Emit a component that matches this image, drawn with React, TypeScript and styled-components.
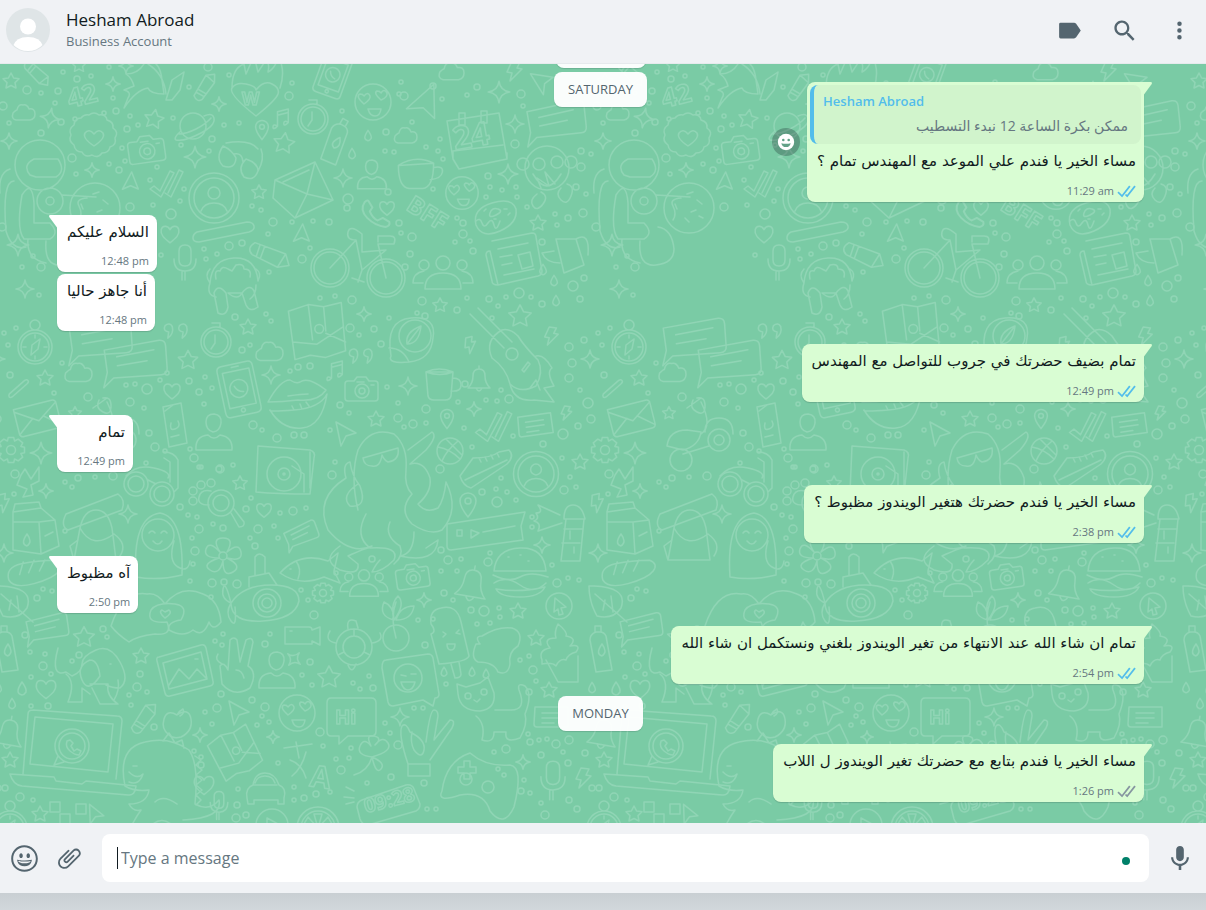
import React from "react";
import styled, { createGlobalStyle, css } from "styled-components";

const GlobalStyle = createGlobalStyle`
  *, *::before, *::after { box-sizing: border-box; }
  body {
    margin: 0;
    background: #d1d6d9;
    color: #111b21;
    font-family: "Open Sans", "Noto Sans", "DejaVu Sans", sans-serif;
  }
`;

/* ---------- layout ---------- */

const Page = styled.div`
  display: flex;
  flex-direction: column;
  min-height: 100vh;
  padding-bottom: 17px;
  background: linear-gradient(to top, #d1d7db, #c9cfd3 17px);
`;

const Header = styled.header`
  position: relative;
  z-index: 2;
  display: flex;
  align-items: center;
  height: 64px;
  padding: 0 13px 4px 6px;
  background: #f0f2f5;
  box-shadow: inset 0 -1px 0 #e6eaed;
`;

const Identity = styled.div`
  flex: 1;
  min-width: 0;
  margin-left: 16px;
`;

const ContactName = styled.h1`
  margin: 0;
  font-size: 17px;
  font-weight: 400;
  line-height: 22px;
`;

const ContactStatus = styled.p`
  margin: 0;
  color: #667781;
  font-size: 13px;
  line-height: 20px;
`;

const HeaderActions = styled.div`
  display: flex;
  gap: 28px;
`;

const IconButton = styled.button`
  display: flex;
  align-items: center;
  justify-content: center;
  flex: none;
  padding: 0;
  border: 0;
  background: none;
  color: #54656f;
  cursor: pointer;
`;

const Chat = styled.main`
  position: relative;
  flex: 1;
  display: flex;
  flex-direction: column;
  justify-content: flex-end;
  overflow: hidden;
  background: #7acba5;
`;

const Wallpaper = styled.svg`
  position: absolute;
  inset: 0;
  width: 100%;
  height: 100%;
`;

const StickyDates = styled.div`
  position: absolute;
  top: -31px;
  left: 57px;
  right: 62px;
  display: flex;
  flex-direction: column;
  align-items: center;
  gap: 4px;
`;

const Messages = styled.ol`
  position: relative;
  display: flex;
  flex-direction: column;
  margin: 0;
  padding: 18px 62px 21px 57px;
  list-style: none;
`;

const MessageRow = styled.li<{ $out?: boolean; $grouped?: boolean }>`
  display: flex;
  align-items: center;
  justify-content: ${(p) => (p.$out ? "flex-end" : "flex-start")};
  gap: 7px;
  margin-top: ${(p) => (p.$grouped ? 2 : 13)}px;
  &:first-child { margin-top: 0; }
`;

const DateRow = styled.li`
  display: flex;
  justify-content: center;
  margin-top: 12px;
`;

const DatePill = styled.span`
  height: 35px;
  padding: 0 14px;
  border-radius: 8px;
  background: rgba(255, 255, 255, 0.96);
  box-shadow: 0 1px 1px rgba(11, 20, 26, 0.14);
  color: #54656f;
  font-size: 13px;
  line-height: 35px;
`;

const LeavingPill = styled(DatePill)`
  width: 90px;
`;

const Bubble = styled.article<{ $out?: boolean; $tail?: boolean }>`
  position: relative;
  min-width: 76px;
  border-radius: 8px;
  background: ${(p) => (p.$out ? "#d9fdd3" : "#ffffff")};
  box-shadow: 0 1px 1px rgba(11, 20, 26, 0.16);
  ${(p) =>
    p.$tail &&
    (p.$out
      ? css`border-top-right-radius: 0;`
      : css`border-top-left-radius: 0;`)}
`;

const TailSvg = styled.svg<{ $out?: boolean }>`
  position: absolute;
  top: 0;
  ${(p) => (p.$out ? "left: 100%;" : "right: 100%;")}
  color: ${(p) => (p.$out ? "#d9fdd3" : "#ffffff")};
`;

const Body = styled.div`
  padding: 6px 8px 3px 10px;
`;

const MessageText = styled.p`
  margin: 0;
  font-family: "DejaVu Sans", sans-serif;
  font-size: 15px;
  line-height: 22px;
`;

const Meta = styled.div<{ $out?: boolean }>`
  display: flex;
  align-items: center;
  justify-content: flex-end;
  gap: 3px;
  height: 16px;
  margin-top: ${(p) => (p.$out ? 11 : 10)}px;
  color: #667781;
  font-size: 11px;
  line-height: 16px;
`;

const Ticks = styled.svg<{ $read?: boolean }>`
  color: ${(p) => (p.$read ? "#53bdeb" : "#8696a0")};
`;

const QuoteInset = styled.div`
  padding: 3px 3px 0;
`;

const Quote = styled.blockquote`
  height: 59px;
  margin: 0;
  padding: 5px 13px 0 9px;
  border-left: 4px solid #53bdeb;
  border-radius: 8px;
  background: #d1f4cc;
`;

const QuoteAuthor = styled.cite`
  display: block;
  color: #53bdeb;
  font-size: 13px;
  font-style: normal;
  font-weight: 600;
  line-height: 22px;
`;

const QuoteText = styled.p`
  margin: 3px 0 0;
  color: #667781;
  font-size: 14px;
  line-height: 22px;
`;

const ReactButton = styled(IconButton)`
  width: 28px;
  height: 28px;
  border-radius: 50%;
  background: rgba(11, 20, 26, 0.26);
  color: #ffffff;
`;

const Composer = styled.form`
  display: flex;
  align-items: center;
  height: 70px;
  padding: 0 13px 0 10px;
  background: #f0f2f5;
`;

const ComposerTools = styled.div`
  display: flex;
  gap: 17px;
  margin-right: 19px;
`;

const Field = styled.label`
  display: flex;
  align-items: center;
  flex: 1;
  min-width: 0;
  height: 48px;
  margin-right: 18px;
  padding: 0 19px 0 15px;
  border-radius: 8px;
  background: #ffffff;
`;

const Caret = styled.span`
  width: 1px;
  height: 22px;
  margin-right: 3px;
  background: #111b21;
`;

const FieldInput = styled.input`
  flex: 1;
  min-width: 0;
  padding: 0;
  border: 0;
  outline: 0;
  background: none;
  color: #111b21;
  caret-color: transparent;
  font: inherit;
  font-size: 16px;
  &::placeholder { color: #667781; opacity: 1; }
`;

const StatusDot = styled.span`
  width: 8px;
  height: 8px;
  margin-top: 6px;
  border-radius: 50%;
  background: #008069;
`;

/* ---------- icons ---------- */

const Glyph = ({ d, size = 27 }: { d: string; size?: number }) => (
  <svg width={size} height={size} viewBox="0 0 24 24" fill="currentColor" aria-hidden="true">
    <path d={d} />
  </svg>
);

const LABEL = "M4 5h12q1.200 0 1.900.9L22 12l-4.100 6.100q-.700.9-1.900.9H4q-1.200 0-1.200-1.200V6.200Q2.800 5 4 5z";
const SEARCH =
  "M15.9 14.3H15l-.3-.3c1-1.1 1.6-2.7 1.6-4.3 0-3.700-3-6.700-6.700-6.700S3 6 3 9.700s3 6.700 6.700 6.700c1.600 0 3.200-.6 4.300-1.600l.3.3v.8l5.100 5.100 1.500-1.500-5-5.200zm-6.200 0c-2.600 0-4.600-2.100-4.600-4.600s2.100-4.600 4.600-4.600 4.600 2.100 4.600 4.600-2 4.600-4.600 4.600z";
const MENU =
  "M12 8a2 2 0 1 0-.001-4.001A2 2 0 0 0 12 8zm0 2a2 2 0 1 0-.001 3.999A2 2 0 0 0 12 10zm0 6a2 2 0 1 0-.001 3.999A2 2 0 0 0 12 16z";
const SMILEY =
  "M9.153 11.603c.795 0 1.439-.879 1.439-1.962s-.644-1.962-1.439-1.962-1.439.879-1.439 1.962.644 1.962 1.439 1.962zm-3.204 1.362c-.026-.307-.131 5.218 6.063 5.551 6.066-.25 6.066-5.551 6.066-5.551-6.078 1.416-12.129 0-12.129 0zm11.363 1.108s-.669 1.959-5.051 1.959c-3.505 0-5.388-1.164-5.607-1.959 0 0 5.912 1.055 10.658 0zM11.804 1.011C5.609 1.011.978 6.033.978 12.228s4.826 10.761 11.021 10.761S23.02 18.423 23.02 12.228c.001-6.195-5.021-11.217-11.216-11.217zM12 21.354c-5.273 0-9.381-3.886-9.381-9.159s3.942-9.548 9.215-9.548 9.548 4.275 9.548 9.548c-.001 5.272-4.109 9.159-9.382 9.159zm3.108-9.751c.795 0 1.439-.879 1.439-1.962s-.644-1.962-1.439-1.962-1.439.879-1.439 1.962.644 1.962 1.439 1.962z";
const CLIP =
  "M1.816 15.556v.002c0 1.502.584 2.912 1.646 3.972s2.472 1.647 3.974 1.647a5.58 5.58 0 0 0 3.972-1.645l9.547-9.548c.769-.768 1.147-1.767 1.058-2.817-.079-.968-.548-1.927-1.319-2.698-1.594-1.592-4.068-1.711-5.517-.262l-7.916 7.915c-.881.881-.792 2.25.214 3.261.959.958 2.423 1.053 3.263.215l5.511-5.512c.28-.28.267-.722.053-.936l-.244-.244c-.191-.191-.567-.349-.957.04l-5.506 5.506c-.18.18-.635.127-.976-.214-.098-.097-.576-.613-.213-.973l7.915-7.917c.818-.817 2.267-.699 3.23.262.5.501.802 1.1.849 1.685.051.573-.156 1.111-.589 1.543l-9.547 9.549a3.97 3.97 0 0 1-2.829 1.171 3.975 3.975 0 0 1-2.83-1.173 3.973 3.973 0 0 1-1.172-2.828c0-1.071.415-2.076 1.172-2.83l7.209-7.211c.157-.157.264-.579.028-.814L11.5 4.36a.572.572 0 0 0-.834.018l-7.205 7.207a5.577 5.577 0 0 0-1.645 3.971z";
const MIC =
  "M11.999 14.942c2.001 0 3.531-1.53 3.531-3.531V4.35c0-2.001-1.53-3.531-3.531-3.531S8.469 2.35 8.469 4.35v7.061c0 2.001 1.53 3.531 3.53 3.531zm6.238-3.53c0 3.531-2.942 6.002-6.237 6.002s-6.237-2.471-6.237-6.002H3.761c0 4.001 3.178 7.297 7.061 7.885v3.884h2.354v-3.884c3.884-.588 7.061-3.884 7.061-7.885h-2z";
const TICKS =
  "M17.394 5.035l-.57-.444a.434.434 0 0 0-.609.076l-6.39 8.198a.38.38 0 0 1-.577.039l-.427-.388a.381.381 0 0 0-.578.038l-.451.576a.497.497 0 0 0 .043.645l1.575 1.51a.38.38 0 0 0 .577-.039l7.483-9.602a.436.436 0 0 0-.076-.609zm-4.892 0l-.57-.444a.434.434 0 0 0-.609.076l-6.39 8.198a.38.38 0 0 1-.577.039l-2.614-2.556a.435.435 0 0 0-.614.007l-.505.516a.435.435 0 0 0 .007.614l3.887 3.8a.38.38 0 0 0 .577-.039l7.483-9.602a.435.435 0 0 0-.075-.609z";

const Avatar = () => (
  <svg width="44" height="44" viewBox="0 0 44 44" role="img" aria-label="Contact picture">
    <defs>
      <clipPath id="avatar-clip"><circle cx="22" cy="22" r="21" /></clipPath>
    </defs>
    <circle cx="22" cy="22" r="22" fill="#dfe5e7" />
    <circle cx="22" cy="18.500" r="8" fill="#fff" />
    <path clipPath="url(#avatar-clip)" d="M7 38q3-9 15-9t15 9v8H7z" fill="#fff" />
  </svg>
);

const ReactionFace = () => (
  <svg width="18" height="18" viewBox="0 0 18 18" aria-hidden="true">
    <circle cx="9" cy="9" r="8.200" fill="#fff" />
    <g fill="#62a187">
      <circle cx="6.300" cy="7" r="1.300" />
      <circle cx="11.700" cy="7" r="1.300" />
      <path d="M4.300 10.200q4.700 1 9.400 0-1 3.900-4.700 3.900t-4.700-3.900z" />
    </g>
  </svg>
);

const Tail = ({ out }: { out?: boolean }) => (
  <TailSvg $out={out} width="8" height="13" viewBox="0 0 8 13" aria-hidden="true">
    <path
      fill="currentColor"
      d={out ? "M0 0h6.600q2.200.3.900 2.200L0 12.500z" : "M8 0H1.400Q-.800.3.500 2.200L8 12.500z"}
    />
  </TailSvg>
);

/* ---------- wallpaper doodles ---------- */

const circle = (x: number, y: number, r: number) =>
  `M${x - r} ${y}a${r} ${r} 0 1 0 ${2 * r} 0a${r} ${r} 0 1 0 ${-2 * r} 0`;

const HEART = "M0 8C-5 4-9 1-8-4C-7-8-2-8 0-4C2-8 7-8 8-4C9 1 5 4 0 8Z";
const PHONE = "M-8-9q-4 6 2 12t14 7q4-1 3-4l-5-3-4 2q-4-2-6-7l2-3-3-5q-1-1-3 1z";

const SHAPES: Record<string, string> = {
  star: "M0-8L2.600-3L8-2.200L4 1.600L5 7L0 4.500L-5 7L-4 1.600L-8-2.200L-2.600-3Z",
  spark: "M0-9Q1-1 9 0Q1 1 0 9Q-1 1-9 0Q-1-1 0-9Z",
  heart: HEART,
  drop: "M0-7Q5 0 4 3Q2 6 0 6Q-4 5-4 2Q-4-1 0-7Z",
  cloud: "M-9 7q-5-1-3-7q3-3 4-3q1-6 6-5q4-1 6 4q6-1 6 5q0 5-5 6z",
  bolt: "M-2-10L6-9L3-3L8-2L-4 10L-2 2L-7 1Z",
  plane: "M-9-12L11-1L1 2L-4 12Z",
  ticks: "M-15 5l4-3 6 5L5-13l4 2L-4 13zM3 9L14-14l4 2L6 13l-6-4",
  cam: `M-15-8h6l3-4h9l3 4h6q3 0 3 3V9q0 3-3 3h-27q-3 0-3-3V-5q0-3 3-3zM8-4h3M-6-7h7${circle(-1, 2, 7)}${circle(-1, 2, 3)}`,
  avatar: `${circle(0, 0, 25)}${circle(0, 0, 20)}${circle(0, -5, 6)}M-13 13q3-8 13-8t13 8`,
  badge: `M-5-22q5-4 10 0q7-1 8 5q7 2 6 8q6 4 2 10q2 7-5 9q-1 6-8 6q-4 6-10 2q-7 3-10-3q-7 0-8-7q-6-4-3-10q-3-6 3-10q1-7 7-7q3-4 8-3zM0 9q-12-8-9-13q4-5 9 1q5-6 9-1q3 5-9 13z`,
  planet: `${circle(0, 0, 13)}M-12 5q-8 7-5 9q8 2 25-7t12-17q-2-3-9 0M-14 8q7 0 17-5t15-11`,
  envelope: "M-28-10L12-28L30 10L-8 28L-30 8ZM-28-10L4 4L12-28M-8 28L4 4M-20-8L6-20M4 4L30 10",
  mail: "M-17-10H13q3 0 3 3V9q0 3-3 3h-27q-3 0-3-3zM-17-8L0 3L16-8M-17 10L-4 0M16 10L4 0",
  note: "M-20-8L17-12q4 0 4 4V7q0 4-4 4H-15l-7 6 3-10zM-12-3L13-6M-12 3L8 1",
  list: "M-16-10H17V10H-14q-3 0-3-3zM-9-4H9M-9 1H9M-9 6H3",
  pencil: "M-18 4L10-6L19 0L12 8L-13 14Q-21 13-18 4ZM10-6L12 8M-9 1l4 11M-13 3l4 10",
  mic: "M-6-11q0-6 6-6t6 6v9q0 6-6 6t-6-6zM-11-3q0 12 11 12T11-3M0 9v9M-3 18V9",
  bike: `${circle(-26, 8, 19)}${circle(30, 18, 19)}${circle(-26, 8, 16)}${circle(30, 18, 16)}M-26 8L0-20q-10 0-8-8t14 2L6-8L30-10L6 10L0-20M6 10l-4 12M30 18L22-16h16q3-8-4-8H22v6M-4 18l12 4`,
  mug: "M-13-12l2 24q1 4 6 4H6q5 0 6-4l2-24zM14-6q8 0 8 7t-10 6M-13-12q13-6 27 0q-13 5-27 0",
  cup: "M-16-6Q-16 14-6 15H6Q16 14 16-8ZM-16-6Q0-16 16-8M16-4q9-2 8 4t-11 7",
  bell: "M-11 9q5-5 5-12t6-7 6 7 5 12zM-3 9q3 6 6 0M0-10v-3",
  pin: `M0 12Q-8 2-8-4A8 8 0 0 1 8-4Q8 2 0 12Z${circle(0, -4, 3)}`,
  quotes: "M-2 8q7-5 5-13q-3-5-8-1q-3 6 4 7zM-18 8q7-5 5-13q-3-5-8-1q-3 6 4 7z",
  music: "M-5 9V-7L7-10V5M-5-3L7-6M-5 9q-5-3-5 1t5-1M7 5q-5-3-5 1t5-1",
  gear: `M-3-14h6l1 4 4-2 5 4-2 4 4 1v6l-4 1 2 4-5 4-4-2-1 4h-6l-1-4-4 2-5-4 2-4-4-1V-3l4-1-2-4 5-4 4 2z${circle(0, 0, 5)}`,
  compass: `${circle(0, 0, 17)}${circle(0, 0, 14)}${circle(0, -22, 5)}M5-8L3 2L-4 8L-3-2ZM0-12v3M0 12v-3M-12 0h3M12 0h-3`,
  clock: `${circle(0, 0, 15)}${circle(0, 0, 12)}M-1-7v8l-4 6M-4-19h8v4`,
  person: "M0-20q8 1 7 9t-8 9q-7-2-7-10t8-8zM-18 16q-1-14 12-15 6 6 12 0 13 2 12 15z",
  group: `${circle(0, -12, 7)}${circle(-19, -10, 5)}${circle(19, -10, 5)}M-18 14q0-16 18-16T18 14ZM-20 8h-10q0-10 11-12M20 8h10q0-10-11-12`,
  love: `${circle(0, 0, 18)}M-9 2q-9-8-4-10q3 0 4 2q4-5 6 0q1 3-6 8zM8-2q-8-7-4-9q3 0 4 2q3-5 6 0q1 4-6 7zM-5 7H8q-1 7-6 7t-7-7z`,
  laptop: `M-40-40l84 6q5 0 5 5l-6 58M-40-40q-5 0-5 4l-5 60M-38-33l78 7-5 48-78-8zM-63 24l44 3 2 4 26 3 4-3 50 5q-1 10-8 9l-106-9q-9-1-12-12z${circle(-1, -4, 17)}${circle(-1, -4, 13)}M-15 6l-4 9 10-3M-6-9q-2 6 3 10t9 4l2-4-4-2-3 2-3-5 2-3-3-3z`,
  donut: `${circle(0, 0, 25)}M-8-10q-12 1-8 8q4 8 0 14M-2-14l6-2M8-8l5 4M2 4l5-2M-4 10l4 4M10 8l4 2M-14-4l2 5`,
  frosted: "M-20 8Q-24-8-4-14T20-8Q22 6 4 14T-20 8ZM-20 4q4-4 6 2t6 0 6 2 6-4M-6-4q2-6 8-4t-2 6-6-2M-12-6l2-2M8-8h3M12-2l2-2M-2 2h2",
  moonface: `M-20 14Q-26-22 0-24T22-4Q20 18-2 20T-20 14Z${circle(4, -6, 16)}M-4 2l14-18M-4 2q12 0 14-18M-4 2q-2-12 14-18M-22 6q14 0 20 14`,
  ball: `${circle(0, 0, 13)}M-12-4Q0-2 10 8M-8 10Q-4 0 8-10M-4-12Q4-4 12 4`,
  shoe: "M-25 8L-12-10Q6-10 14-16L24-18Q30-12 22-4L-14 20Q-22 18-25 8ZM-20 12L22-8M-6-10l2 4M0-11l2 4M6-13l2 4M12-15l2 4",
  glasses: `M-21-11q-8 12 0 20q12 4 13-8q-4-8-13-12zM2 2q-9 9-2 18q10 5 14-6 0-8-12-12zM-10-3q8-2 9 8M-18-14Q6-18 14-8M14 14q7-12 3-22`,
  scooter: `${circle(24, 2, 11)}${circle(-14, 22, 11)}${circle(24, 2, 5)}M-28 8q2-16 20-16l14 2q-2 14-18 18zM6-4Q18-12 6-36M-8-30l14-10M2-40q8-2 8 8t-8 6-4-12M10-6q0-14 14-14t14 16M-12 16L14 8`,
  record2: "M0 0",
  phonebox: `M-15-26H11q5 0 5 5v42q0 5-5 5h-26q-5 0-5-5v-42q0-5 5-5zM-15-19H12v36H-15zM-5-23h7${circle(-2, 21, 2)}${circle(-2, -1, 9)}M-6-4q2 6 8 7`,
  lips: "M-30 0q12-22 22-22 6 4 10 2 8-6 26 8-8 12-28 10-16 2-30 2zM-28 8q12 20 32 18T29-8Q22 6-4 8T-28 8M-10-6q14-2 20-2M-6 4l2 4M2 2l2 5M8 0l3 4",
  map: `M-26-18L-8-24L6-22L22-26L26 18L8 24L-6 22L-20 26ZM-8-24L-4 8M6-22L8 0M-22 10L0 12L24-4${circle(2, -2, 4)}M26 10L8 2`,
  tag: "M-12-18L6-22L12 18L-6 22ZM-4-2q-2 8 4 6t3-8M-4 12l8-2M-10-14L-2-20",
  octopus:
    "M-22 30Q-30-4-22-30Q-10-54 14-46Q28-34 26-10Q24 6 32 14M-22 4Q-40 16-30 26Q-12 28-20 6Q-28-4-30-18M-30-18q-8 2-4 16Q-66 18-52 50Q-30 76-8 66M32 14Q18 30 32 44Q50 56 62 50Q80 30 66 2Q64 20 58 28Q46 34 38 24Q52 12 50-2Q44-20 30-16M28-30L52-48Q58-44 46-30L30-16M-14 34Q-26 56-10 68Q20 66 14 80Q2 92-8 92Q-4 84 0 80M-40 66Q-60 80-40 90Q-20 96-22 84L-32 76Q-10 66-8 68M10 42Q4 56 20 66Q24 76 14 84M34 52Q34 74 20 76Q56 84 58 60L46 68M-17-22L18-32Q20-20 8-18Q4-20 2-25Q0-12-8-14Q-16-14-17-22",
  dino: "M-38 28q-8-38 20-44 24-6 44 8 10 14 6 54 14 8 24-4 4 18-36 20M-30 8l4 0M-34 14q8 8 14 2-4 12-14 8M-38 28q10 6 24 4-2 14-20 14 4 8 12 6-10 14-12 24 14 12 24 4M-8 44q8-8 22 2M-10 66q10-8 20 2 0 10-12 10M0-17l6-8 6 10 7-3 2 8M32-2l6 4-5 5 6 5-6 5 6 5-6 5 6 5-6 5 5 5-5 5",
  burger: `M-26-4Q-24-26 0-27T26-4ZM-27 0Q-10 8 0 2T28 2M-26 8Q-14 0 0 10T26 8M-24 14Q0 18 25 12Q20 22 0 22T-24 14M-12-18h1M0-20h1M8-14h1`,
  carton: "M-18-18L10-22L24-10L28 16L10 24L-18 20ZM-18-18L-16-26L8-28L10-22M-18-8L8-8L10 24M8-8L24-10M-4 4q6 8 0 12q-7-2 0-12M14 6l8-4",
  backpack: "M-16-8Q-12-26 0-26T16-8L20 24H-22ZM-16-8Q-4 14 18-2M-22 24L-26 10L-18 4M18-2q14 10 6 22M-30-22L22-42q8 6 4 16L-28-6q-8-4-2-16",
  snowman: `M-22 30Q-26-30 2-34Q26-30 24 28Q0 34-22 30Z${circle(0, -12, 16)}M-9-14q3-4 6 0M3-14q3-4 6 0M-5-6q5 6 9 0M16-6q-6 20 4 26t12-6`,
  flower: `${circle(0, 0, 4)}M-3-4Q-12-18 0-18T4-4Q16-14 18-4T4 2Q20 10 10 16T0 5Q-4 20-13 14T-4 2Q-20 2-17-7T-3-4`,
  fish: "M-30 4Q-10-18 18-8L28-16L24 2L30 14L14 8Q-10 18-30 4ZM-14-8q6 8 2 18M-20 0h1",
  leaf: "M-18-16Q22-16 14 6Q6 18-10 14Q-18 0-18-16ZM-12-8L20 20M-4 8L-2-2M6 10L4-6",
  loaf: "M-28 10q-4-14 14-18t38-4q10 4 4 12t-28 14-28-4zM-16 4l4-14M-6 2l6-14M6 0l6-12",
  record: `M-28-26L24-22Q30-20 28-14L24 22Q-8 22-30 20ZM24-20v36${circle(-2, 2, 17)}${circle(-2, 2, 6)}${circle(-2, 2, 1)}M6-6l12 8v18`,
  hands: "M-56 10Q-44-26-20-22Q-10-24-2-12Q14-32 36-22Q52-16 54 6Q46 16 42 6Q36 22 26 14Q16 22 2 14Q0 6 14 4Q22-10 8-12Q-10-14-16-6Q-22 8 0 6Q6 20-12 18Q-30 20-38 26Q-50 18-56 10ZM-2 2q-7-6-3-8l3 2 4-2q4 3-4 8",
  submarine: `M-36 0Q-24-18 4-18T32-2Q28 16-4 18T-36 0ZM-36 0q-10-4-8-14t8 14q-6 10 0 18t4-14M-18-16v-10l20-4 8 12M-12-28v-18q4-6 10 0v16${circle(0, 0, 14)}${circle(0, 0, 9)}${circle(0, 0, 5)}`,
  magnifier: `${circle(0, 0, 13)}${circle(0, 0, 8)}M10 10l8 14q6 0 5-5L13 6M-10-12q-10-2-12 6t10 8${circle(-20, -18, 4)}${circle(-10, -20, 4)}${circle(-28, -12, 4)}${circle(-28, -2, 4)}`,
  binoculars: `${circle(-16, 0, 12)}${circle(10, 10, 12)}${circle(-16, 0, 8)}${circle(10, 10, 8)}M-4-4l8 4M-26-8q10-12 28-8t14 10M22 8l4-4V-24q-4-8-14-8M18-2V-22l-6-4`,
  picture: "M-24-14L18-26q4-1 5 3l7 33q1 4-3 5l-40 10q-4 1-5-3l-8-32q-1-4 2-4zM-20-8L18-19L24 8L-14 18ZM-14 14L-4-2L6 8L14-2L24 8M12-12h3",
  dog: "M-30-26q-8 30 8 24L-16 2q10-4 10-12t14-14 24 12 0 26q-8 0-14-3M-22 0q10 8 2 28h14v-14l8 6M2 10h18q-2 12 10 20h-18l-8-16M30 6q2 10-4 20M2-14q-14 6-8 20t18-4q-2-16-10-16M22-10h1",
  peace: "M-12 4L-10-26q4-4 7 0L0-4L6-26q6-4 7 2L8 0q10 6 2 22Q-6 32-18 18L-20 0q4-5 8 4M-4 4q6 0 8 8M-18-2q-8-4-4-10",
  turtle: `${circle(0, 0, 18)}${circle(0, 0, 11)}M-18-4q-12-2-6-12M18-4q12-2 8-10M-6-18q-2-12 8-8l2 7M0-18v7M-16 8l6-3M16 8l-6-3M-6 18q4 10 8-1`,
  apple: "M0-8q12-8 14 4T4 14Q-4 16-8 12-16 6-13-4T0-8zM0-8Q2-12 6-14q2 4-3 7",
  car: "M-18 8q-2-10 6-13 2-12 12-12t14 12q8 3 5 13v6h-6v-4h-24v4h-6zM-12-5h24M-10-7q2-7 10-7t10 7",
  clover: "M0 0q-16-2-12-11t11 0q-6-12 3-10t1 9q8-10 13-2T0 0q14 6 9 12T0 0q-4 14-18 18",
  boxes: "M-18-10h10v10h-10zM8-8h10v10H8zM-8 2h10v10H-8z",
  lighthouse: "M-8-14L-13 28H6L10-14ZM-10-14q0-14 9-14t12 14zM-10-4H8M-12 10H6M-14-18L-36-28q6 8-2 8 4 6-2 8 8 2 4 10L-12-10M-4-2v8M0 14v6",
  guitar: `M-40-50L-6-16M-32-56L2-22M-8-34Q-26-24-18-6Q-4 4 0 20Q10 30 26 22Q34 8 28-4Q14-18 8-28Q0-36-8-34${circle(2, -10, 6)}M12 6l6-8 2 2-6 8zM0 20Q4 38 24 36L44 38L34 24L44 22Q36 8 42 4Q34-10 26-8M20 24l6-8 4 10`,
  pad: `M-34 16Q-30-14-6-22Q10-8 34-10Q48-8 38 32Q28 54 14 36Q8 16-16 20Q-40 28-34 16Z${circle(-10, 4, 6)}${circle(12, 12, 6)}M-12-14h6v6h6v6h-6v6h-6v-6h-6v-6h6z${circle(22, -6, 2)}${circle(28, 0, 2)}`,
  cat: `M-32-20l-1-10 9 3 14-4 8-6 6 16q2 16-14 18-20 0-22-17zM-14 2Q-4 10-8 26q12 4 12-8h12q-2 12 14 6 8-14 5-24 8-20 0-28-8-4-6 4 8 20-8 20l-16 0${circle(-22, -18, 3)}${circle(-6, -22, 3)}M-16-14l3 2 3-3`,
  icepop: "M-22-14q-2-14 10-16 16-4 20 14l8 34q-2 6-30 8l-8-30q6-2 0-10zM-2 26l4 14q6 0 6-4l-2-12M-10-6l3 2-3 3M6-8l-3 3 4 1M-6 6h8q0 6-4 6t-4-6z",
  blob: "M-20-8q-6-8 2-8 16-10 30-8 12 4 6 18-10 6-8 18-2 12-12 8-4-10-20-10-8-4-2-18z",
  cupcake: "M-14 8l12 22h20l0-26M-18 8Q-22-2-10-4-18-14-4-14-6-20-2-28q10 8 8 12 12 2 4 10 12-2 6 6-8 2-10 8-6-2-10 6-4-4-14-2z",
  bottle: "M-6-16q-6 2-6 8l6 32 16-2-6-34q-2-4-6-4zM-7-22h6v6h-6zM0-4q6 8 0 12q-7-2 0-12",
  hand: "M-22 24q-10-30-6-38 4-4 8 6 16 8 14 18-2 10-10 0-4-8-2-18M-4 2Q0-30 4-30t4 6L4 0 20-20q6 0 2 8L0 20M-22 24H0v12h-22z",
  cherry: `${circle(0, 14, 13)}M0 14Q-6-6 0-22M-2-4q-16-4-10-18 10 4 10 18M-2-4q-4-16 4-24 8 8-4 24M0-4q4-14 18-14-2 14-18 14`,
  lemon: `${circle(0, 0, 21)}${circle(0, 0, 17)}M0 0L-4-14H4ZM0 0L10-11 14-4ZM0 0L-14-4-10-11ZM0 0L-14 8M0 0L14 8`,
  play: `${circle(0, 0, 16)}M-5-7L8 0L-5 7Z`,
  cursor: `${circle(0, 0, 13)}M-4-8L7 1L2 2L4 8L0 9L-1 3L-5 6Z`,
  watering: "M-12-14h20l8 26-20 8zM-14-2L-26 0q4 10 18 10M8-14q14-8 12 16",
  news: "M-20-22L20-30Q24-30 24-26L30 8Q30 12 26 13L-14 22Q-20 22-20 18L-26-8Q-26-12-22-12L-14 22M-14-14L16-20M-12-6L0-8M-10 2L0 0M6-8l12-3 3 14-11 3zM-8 12l30-6",
  calendar: "M-26-18L26-26 34 20-14 30-20 20zM-20 20-20 12 30 6M-14-26h6v12h-6zM8-28h6v12H8zM-14 30l48-10v-6",
  monkey: `${circle(0, -2, 22)}${circle(-8, -6, 6)}${circle(10, -8, 6)}${circle(-24, -6, 6)}${circle(24, -8, 6)}M-14 4Q0 28 14 4M-6 18l-4-10 12 8-4-14 10 12M-10 24q-8 6-4 12t10-2-2-12M14 18q-6 6 0 12t10-4-4-12`,
  hide: "M-24-2Q-22-26 0-27T24-4M-24-2q-6-8 0-14M24-4q4-8-2-12M-24-2q-4 12 6 14M22 0q0 10-6 14M-18-6q-2-10 4-8 2-6 8-2l4 2 4-6q8-2 8 4 8 0 6 8M-20 8q4-10 12 0l2 14q-2 10-10 6zM20 6q-4-8-12 2l4 12q4 8 12 2zM-6 8h14q-4 8-14 0z",
  astronaut: `${circle(6, -10, 25)}M-4 0q-8-10 4-16h24q8 12-2 18h-20zM-20 6q-12 0-8 50 6 20 20 16M-24-6q-12 4-10 24M-12 20q10-16 12 8v20h16q10 10 0 16h-26q-8-10-2-44z${circle(16, 26, 13)}${circle(16, 26, 4)}M-6 64q-2 20 18 24M12 66q-2 26 16 24t18-16q-2-20-16-22M28 20l34 2`,
  flame: "M-24-6q0-20 12-24l2 10L-2-38 2-22 10-34q4 4 2 12 8-4 10-16 8 14 2 32M0 22Q-28 0-24-6t14-4 10 6q8-10 16-6t6 10T0 22z",
  comet: "M-22 22l4-10q4-6-4-8l10-4q-2-8-8-12 14 0 20-14 14 0 16 20l2 14q-14 0-16-6-12 2-24 20zM2-22Q18-12 20 8M20 14L26-6 38-14 34 4 26 14z",
  bubblesmile: `M-22-22L20-28q4 0 5 4l6 36q0 4-4 4l-2 8-10-6-30 6q-4 0-5-4l-6-34q0-8 4-8z${circle(0, -4, 14)}M-7-7l5 1M3-8h5M-7 0H7q-2 8-7 8t-7-8z`,
  voice: "M-38-8L40-20 36-6 38 8-34 18q-4 0-4-4zM-28-2v6h5v-6zM-14-2v8l8-5zM-2 0L30-6",
  bowtie: "M-8-6L-4-12 2-2 10-14V0L2 4 4 14-6 16-2 8-12 4z",
  book: "M-26 2L24-8q6 0 7 4t-5 6L-24 12q-6 0-6-4t4-6z",
  camcorder: "M-15-8H9q3 0 3 3l8-3V10L12 6V9H-15zM-10-4h2",
};

type Doodle = [kind: string, x: number, y: number, scale?: number, turn?: number];

const DOODLES: Doodle[] = [
  ["star", 11, 81, 1], ["star", 154, 119, 1.2, 10], ["star", 259, 192, 0.9], ["star", 284, 143, 1.3, 8], ["star", 79, 65, 0.9],
  ["spark", 50, 118, 1.1, 10], ["spark", 113, 84, 0.8], ["spark", 9, 141, 0.9], ["spark", 195, 157, 1.2], ["spark", 92, 170, 0.8], ["spark", 219, 104, 0.8], ["spark", 126, 66, 0.8],
  ["cloud", 25, 113, 1], ["cam", 148, 149, 1.1, -8], ["badge", 94, 137, 1], ["planet", 193, 126, 1], ["flame", 256, 94, 1], ["comet", 146, 86, 1, 0],
  ["astronaut", 34, 175, 1], ["donut", 95, 208, 1], ["plane", 131, 184, 0.8, 40], ["ticks", 165, 184, 1], ["avatar", 214, 198, 1], ["glasses", 244, 157, 1], ["music", 282, 118, 0.9], ["pin", 262, 130, 0.8],
  ["pencil", 203, 84, 0.8, -40], ["pencil", 40, 72, 0.8, 60], ["envelope", 303, 190, 1],
  ["star", 45, 378, 1], ["star", 188, 360, 1.2], ["star", 248, 327, 1], ["star", 376, 419, 1], ["star", 75, 413, 0.8],
  ["spark", 18, 245, 1.2], ["spark", 25, 289, 1], ["spark", 41, 453, 1.2], ["spark", 364, 314, 0.8], ["spark", 271, 375, 1],
  ["mic", 185, 262, 1], ["hide", 234, 285, 1], ["pencil", 273, 252, 1.1, 40], ["book", 223, 230, 1], ["heart", 170, 234, 1.1], ["plane", 302, 236, 0.8, 40], ["bike", 356, 260, 1],
  ["map", 317, 331, 1.1], ["clock", 216, 342, 1], ["cloud", 271, 352, 1.2], ["quotes", 184, 331, 0.9], ["quotes", 369, 356, 0.9], ["compass", 35, 347, 1], ["note", 135, 360, 1.5, -4], ["note", 100, 338, 1.5, -4],
  ["cloud", 80, 373, 1.2], ["phonebox", 241, 389, 1, -12], ["lips", 298, 402, 1], ["music", 336, 370, 0.9], ["cam", 363, 389, 1], ["heart", 172, 391, 1], ["mail", 38, 417, 1.3, -14], ["gear", 11, 450, 0.9],
  ["tag", 175, 425, 1], ["person", 214, 434, 1], ["plane", 345, 434, 1, 0], ["book", 18, 388, 0.4, -30], ["octopus", 380, 480, 1], ["record", 286, 472, 1], ["scooter", 101, 438, 1],
  ["love", 373, 102, 1], ["calendar", 473, 139, 1], ["cloud", 407, 136, 1], ["cup", 416, 172, 1.1], ["love", 462, 193, 0.9], ["monkey", 547, 170, 1], ["frosted", 496, 217, 1, 0],
  ["bottle", 338, 141, 1, 30], ["clock", 313, 119, 1], ["drop", 368, 136, 0.8], ["drop", 352, 154, 0.8], ["person", 372, 176, 0.8], ["phonebox", 334, 76, 0.8, 20], ["plane", 425, 105, 1.5, 60],
  ["spark", 499, 92, 1.2], ["spark", 515, 124, 1], ["spark", 343, 178, 1], ["spark", 508, 174, 1.1], ["bolt", 514, 71, 1], ["cloud", 453, 72, 1.1], ["plane", 543, 82, 1, -20], ["note", 556, 120, 1.4, -6],
  ["group", 443, 275, 1], ["news", 512, 263, 1], ["watering", 568, 253, 1], ["star", 538, 223, 1], ["star", 440, 305, 0.9], ["star", 520, 316, 1.4], ["heart", 387, 208, 0.9], ["drop", 543, 270, 0.8], ["drop", 554, 281, 0.8], ["drop", 556, 301, 0.8],
  ["guitar", 510, 364, 1], ["mug", 439, 384, 1], ["bell", 479, 379, 1], ["bolt", 470, 345, 0.8, -20], ["bolt", 551, 336, 0.9], ["spark", 408, 386, 1], ["spark", 474, 409, 0.8], ["spark", 590, 359, 1],
  ["moonface", 411, 342, 1], ["pin", 447, 419, 0.8], ["ticks", 492, 427, 1.1], ["list", 535, 425, 1, -8], ["bolt", 566, 413, 0.7], ["ball", 450, 451, 1], ["shoe", 485, 468, 1], ["avatar", 536, 474, 0.9], ["star", 580, 462, 1],
  ["pin", 468, 505, 1], ["voice", 485, 532, 1], ["lighthouse", 574, 533, 1], ["burger", 520, 575, 1], ["cam", 414, 576, 1, -8], ["group", 364, 585, 0.8], ["bell", 472, 584, 1.4, 10], ["spark", 542, 545, 0.9], ["bolt", 597, 503, 0.9, -20],
  ["star", 240, 483, 0.9], ["bowtie", 29, 481, 1], ["spark", 46, 491, 0.8], ["carton", 31, 530, 1], ["backpack", 96, 536, 1], ["binoculars", 152, 484, 1], ["spark", 128, 514, 1], ["snowman", 158, 547, 1], ["flower", 223, 556, 1],
  ["heart", 264, 510, 0.9], ["note", 301, 534, 0.8, -20], ["fish", 310, 569, 1], ["leaf", 13, 602, 1], ["loaf", 34, 571, 0.9], ["spark", 4, 553, 1], ["submarine", 267, 603, 1], ["hands", 167, 616, 1], ["note", 47, 627, 1, -8], ["star", 84, 637, 1.3],
  ["bottle", 8, 648, 1], ["gear", 323, 593, 0.7], ["camcorder", 300, 635, 1], ["magnifier", 221, 503, 1],
  ["dog", 88, 674, 1], ["heart", 46, 689, 1.2], ["star", 141, 656, 1], ["picture", 183, 671, 1], ["peace", 240, 666, 1], ["person", 277, 672, 1], ["turtle", 354, 647, 1], ["star", 329, 677, 1.4], ["spark", 294, 659, 0.9, 40],
  ["drop", 22, 689, 1], ["drop", 12, 704, 0.8], ["laptop", 73, 750, 1], ["dino", 163, 758, 1], ["pencil", 142, 715, 0.9, -38], ["apple", 177, 723, 1], ["plane", 238, 713, 1, 0], ["love", 297, 713, 1], ["spark", 200, 735, 0.8], ["spark", 273, 737, 0.7],
  ["map", 235, 753, 0.9, -20], ["clover", 372, 757, 1], ["heart", 204, 785, 1.2], ["car", 265, 790, 1], ["mic", 219, 805, 0.8], ["boxes", 68, 812, 1], ["star", 40, 814, 1], ["compass", 10, 828, 1], ["lemon", 318, 828, 1], ["play", 272, 825, 1], ["bell", 9, 733, 1.3, 10], ["star", 10, 760, 1], ["plane", 95, 815, 0.8, 10],
  ["cherry", 396, 624, 1], ["spark", 424, 600, 0.8], ["icepop", 453, 638, 1], ["blob", 500, 652, 1], ["cupcake", 560, 652, 1], ["star", 518, 611, 1], ["star", 536, 638, 1], ["cursor", 559, 606, 1], ["bubblesmile", 408, 682, 1],
  ["cat", 490, 714, 1], ["star", 549, 690, 1], ["hand", 430, 740, 1], ["pad", 476, 775, 1], ["mic", 553, 780, 1.1], ["bolt", 583, 778, 1], ["spark", 400, 717, 1], ["spark", 523, 762, 0.8], ["drop", 444, 672, 0.7], ["drop", 472, 672, 0.7], ["drop", 486, 674, 0.7],
  ["list", 551, 717, 1], ["drop", 592, 688, 0.8],
];

const DOTS = [
  27, 90, 4, 41, 93, 2, 58, 91, 3, 63, 72, 2, 77, 79, 3, 91, 76, 2, 109, 67, 2, 3, 106, 4, 9, 123, 2, 41, 133, 3, 61, 122, 3,
  55, 103, 2, 113, 98, 2, 104, 113, 2, 116, 111, 3, 130, 116, 2, 75, 119, 2, 138, 125, 2, 127, 129, 3, 122, 148, 2, 125, 161, 2,
  109, 164, 2, 119, 170, 3, 76, 174, 2, 72, 158, 4, 157, 167, 2, 208, 67, 4, 229, 75, 2, 189, 87, 2, 173, 118, 2, 212, 139, 3,
  181, 145, 2, 209, 151, 2, 289, 96, 4, 292, 83, 2, 239, 123, 2, 224, 125, 2, 150, 180, 2, 180, 201, 2, 184, 189, 2, 130, 207, 4,
  153, 205, 2, 171, 214, 5, 252, 206, 2, 261, 210, 2, 2, 227, 4, 273, 222, 4, 268, 234, 2, 292, 222, 2, 313, 221, 2, 329, 222, 3,
  347, 208, 3, 22, 267, 2, 33, 256, 2, 41, 267, 4, 39, 295, 2, 204, 249, 2, 229, 246, 4, 242, 243, 3, 206, 259, 2, 217, 254, 2,
  161, 255, 2, 302, 259, 4, 310, 248, 2, 269, 272, 2, 320, 298, 2, 335, 296, 2, 352, 300, 4, 235, 317, 3, 266, 314, 2, 271, 321, 2,
  250, 345, 2, 242, 350, 3, 350, 328, 4, 359, 335, 2, 374, 329, 3, 389, 318, 2, 381, 344, 3, 16, 328, 2, 8, 345, 2, 4, 333, 2,
  160, 380, 2, 167, 373, 2, 189, 381, 3, 205, 377, 2, 147, 389, 5, 126, 385, 2, 135, 384, 2, 62, 363, 2, 10, 375, 3, 54, 393, 2,
  88, 397, 4, 130, 402, 4, 199, 392, 3, 212, 388, 2, 204, 404, 2, 290, 371, 2, 298, 367, 3, 310, 366, 3, 144, 408, 2, 155, 447, 4,
  149, 433, 3, 146, 463, 2, 165, 451, 2, 190, 449, 2, 194, 458, 4, 199, 467, 2, 220, 469, 4, 233, 465, 2, 253, 425, 4, 262, 430, 2,
  277, 438, 4, 294, 435, 3, 304, 435, 3, 330, 430, 2, 340, 405, 3, 349, 413, 2, 387, 387, 2, 398, 403, 2, 426, 409, 4, 398, 418, 4,
  413, 424, 4, 426, 423, 2, 404, 427, 2, 465, 384, 3, 458, 402, 2, 486, 400, 2, 497, 401, 2, 509, 399, 4, 501, 390, 2, 569, 378, 4,
  572, 363, 4, 580, 390, 2, 588, 403, 5, 591, 419, 4, 569, 347, 4, 584, 340, 3, 563, 434, 5, 578, 426, 3, 513, 436, 2, 543, 444, 3,
  472, 447, 2, 464, 428, 2, 440, 469, 4, 562, 458, 2, 570, 477, 2, 564, 490, 4, 576, 487, 2, 501, 478, 2, 482, 492, 3, 496, 489, 2,
  507, 492, 2, 497, 502, 5, 516, 500, 2, 532, 517, 2, 532, 527, 2, 441, 550, 3, 448, 560, 4, 461, 559, 2, 488, 562, 4, 490, 553, 2,
  552, 565, 2, 457, 571, 2, 441, 571, 2, 444, 593, 3, 453, 600, 2, 372, 559, 3, 336, 573, 2, 557, 583, 4, 568, 578, 2, 579, 580, 2,
  332, 475, 4, 335, 462, 2, 15, 474, 4, 14, 494, 2, 78, 478, 3, 95, 477, 2, 113, 476, 4, 65, 482, 2,
  72, 487, 2, 65, 531, 2, 180, 507, 3, 188, 515, 2, 197, 517, 2, 199, 529, 4, 213, 524, 2, 192, 538, 2, 193, 564, 2, 195, 551, 4,
  223, 528, 3, 219, 469, 3, 201, 467, 2, 246, 509, 3, 251, 498, 2, 280, 513, 2, 293, 511, 4, 306, 508, 2, 258, 529, 4, 274, 526, 2,
  278, 538, 2, 250, 538, 2, 255, 546, 3, 212, 583, 4, 224, 582, 3, 237, 584, 4, 211, 597, 2, 190, 581, 2, 301, 590, 2, 308, 600, 2,
  314, 615, 4, 103, 629, 3, 37, 598, 3, 43, 589, 2, 52, 591, 2, 25, 635, 3, 30, 652, 2, 45, 654, 2, 107, 637, 2, 215, 641, 2,
  223, 634, 2, 222, 645, 2, 265, 644, 3, 270, 634, 2, 43, 666, 4, 51, 674, 2, 31, 677, 2, 72, 661, 2, 79, 655, 3, 140, 674, 3,
  137, 687, 4, 129, 695, 2, 147, 692, 2, 131, 705, 2, 48, 706, 3, 31, 706, 2, 221, 694, 3, 217, 708, 4, 205, 712, 2, 212, 724, 2,
  252, 700, 3, 265, 707, 4, 262, 716, 2, 269, 722, 2, 257, 725, 2, 154, 727, 3, 302, 675, 2, 312, 685, 2, 310, 662, 3, 353, 683, 2,
  369, 676, 2, 373, 688, 3, 360, 689, 2, 320, 732, 4, 323, 746, 2, 336, 759, 2, 341, 770, 4, 349, 758, 2, 351, 748, 2, 385, 723, 2,
  390, 733, 2, 194, 751, 2, 201, 757, 2, 201, 765, 3, 278, 763, 2, 294, 787, 2, 294, 800, 2, 304, 798, 3, 316, 794, 3, 330, 792, 2,
  238, 789, 2, 237, 805, 3, 236, 818, 4, 246, 815, 3, 5, 788, 3, 20, 797, 4, 33, 800, 2, 367, 783, 2, 391, 777, 3,
  471, 610, 3, 484, 611, 5, 499, 608, 2, 418, 620, 2, 433, 619, 2, 425, 645, 3, 477, 624, 2, 490, 623, 2, 500, 617, 2, 529, 656, 2,
  520, 660, 2, 533, 670, 4, 536, 681, 2, 529, 692, 3, 446, 684, 2, 414, 708, 2, 423, 708, 2, 398, 745, 4, 494, 752, 2,
  506, 749, 4, 528, 734, 2, 530, 742, 3, 539, 740, 2, 547, 739, 2, 556, 744, 4, 569, 740, 4, 541, 755, 3, 563, 752, 2, 568, 763, 3,
  585, 753, 3, 524, 780, 2, 521, 791, 3, 530, 793, 2, 424, 783, 3, 427, 809, 2, 436, 809, 2, 569, 800, 3, 541, 803, 2, 545, 815, 4,
  577, 809, 3, 592, 788, 3, 401, 82, 2, 399, 94, 2, 433, 86, 3, 477, 87, 3, 467, 95, 2, 442, 99, 2, 404, 96, 4,
  342, 111, 2, 412, 122, 2, 386, 132, 3, 426, 147, 2, 440, 139, 2, 438, 151, 2, 394, 152, 2, 385, 151, 2, 443, 159, 2, 433, 189, 2,
  521, 94, 4, 523, 106, 2, 515, 144, 4, 488, 176, 3, 490, 187, 2, 502, 190, 2, 516, 187, 2, 517, 197, 2, 486, 197, 2,
  581, 151, 3, 581, 167, 4, 591, 154, 2, 576, 187, 3, 586, 194, 2, 527, 207, 2, 555, 214, 2, 568, 218, 3, 583, 213, 4, 557, 225, 2,
  457, 218, 2, 463, 223, 3, 470, 241, 2, 463, 234, 4, 455, 242, 2, 473, 251, 3, 542, 242, 3, 412, 237, 4, 401, 233, 2,
  410, 254, 3, 405, 267, 3, 388, 192, 3, 399, 223, 3, 348, 199, 5, 519, 293, 5, 489, 299, 3, 506, 297, 2, 498, 306, 2, 492, 318, 2,
  531, 297, 2, 542, 304, 3, 457, 310, 3, 467, 298, 2, 422, 301, 4, 417, 313, 2, 425, 316, 3, 573, 286, 5, 580, 299, 3, 584, 278, 3,
];

const DOODLE_TEXT: [string, number, number, number, number][] = [
  ["42", 70, 108, 26, -14],
  ["W", 242, 105, 18, 0],
  ["24", 455, 150, 32, -10],
  ["BFF", 405, 209, 24, 32],
  ["Hi", 335, 724, 20, 0],
  ["09:28", 366, 813, 20, -14],
  ["A", 309, 786, 30, 8],
];

const WallpaperArt = () => (
  <Wallpaper aria-hidden="true">
    <defs>
      <g id="doodles">
        {DOODLES.map(([kind, x, y, scale = 1, turn = 0], i) => (
          <path
            key={i}
            d={SHAPES[kind]}
            vectorEffect="non-scaling-stroke"
            transform={`translate(${x} ${y}) rotate(${turn}) scale(${scale})`}
          />
        ))}
        <path d={Array.from({ length: DOTS.length / 3 }, (_, i) => circle(DOTS[i * 3], DOTS[i * 3 + 1], DOTS[i * 3 + 2])).join("")} />
        <path d={PHONE} transform="translate(375 214) scale(1.300)" />
        <path d="M331 698h40q5 0 5 5v28q0 5-5 5h-23l-9 8v-8h-8q-4 0-4-5v-28q0-5 4-5z" />
        <path d="M362 800l44-15q6-1 8 4l6 15q0 5-4 7l-48 14q-6 0-8-6l-3-12q0-5 5-7zM346 787l8 4M344 797l10 1M346 804l8-2" />
        <path d="M284 748l28-4M296 742l3 16M290 760q12 4 16 18M306 752q-4 16-14 24" />
        {DOODLE_TEXT.map(([text, x, y, size, turn]) => (
          <text key={text} x={x} y={y} fontSize={size} fontWeight="700" transform={`rotate(${turn} ${x} ${y})`}>
            {text}
          </text>
        ))}
      </g>
      <pattern id="wallpaper" width="594" height="759" patternUnits="userSpaceOnUse">
        <g transform="translate(0 -64)" fill="none" stroke="#90d5b5" strokeWidth="1.500" strokeLinejoin="round" strokeLinecap="round">
          <use href="#doodles" />
          <use href="#doodles" x="-594" />
          <use href="#doodles" x="594" />
        </g>
      </pattern>
    </defs>
    <rect width="100%" height="100%" fill="url(#wallpaper)" />
  </Wallpaper>
);

/* ---------- conversation ---------- */

type Entry =
  | { kind: "date"; label: string }
  | {
      kind: "message";
      text: string;
      time: string;
      out?: boolean;
      read?: boolean;
      grouped?: boolean;
      quote?: { author: string; text: string };
    };

const ENTRIES: Entry[] = [
  {
    kind: "message",
    out: true,
    read: true,
    time: "11:29 am",
    text: "مساء الخير يا فندم علي الموعد مع المهندس تمام ؟",
    quote: { author: "Hesham Abroad", text: "ممكن بكرة الساعة 12 نبدء التسطيب" },
  },
  { kind: "message", time: "12:48 pm", text: "السلام عليكم" },
  { kind: "message", time: "12:48 pm", text: "أنا جاهز حاليا", grouped: true },
  { kind: "message", out: true, read: true, time: "12:49 pm", text: "تمام بضيف حضرتك في جروب للتواصل مع المهندس" },
  { kind: "message", time: "12:49 pm", text: "تمام" },
  { kind: "message", out: true, read: true, time: "2:38 pm", text: "مساء الخير يا فندم حضرتك هتغير الويندوز مظبوط ؟" },
  { kind: "message", time: "2:50 pm", text: "آه مظبوط" },
  {
    kind: "message",
    out: true,
    read: true,
    time: "2:54 pm",
    text: "تمام ان شاء الله عند الانتهاء من تغير الويندوز بلغني ونستكمل ان شاء الله",
  },
  { kind: "date", label: "MONDAY" },
  { kind: "message", out: true, time: "1:26 pm", text: "مساء الخير يا فندم بتابع مع حضرتك تغير الويندوز ل اللاب" },
];

export default function App() {
  return (
    <>
      <GlobalStyle />
      <Page>
        <Header>
          <Avatar />
          <Identity>
            <ContactName>Hesham Abroad</ContactName>
            <ContactStatus>Business Account</ContactStatus>
          </Identity>
          <HeaderActions>
            <IconButton type="button" aria-label="Labels"><Glyph d={LABEL} /></IconButton>
            <IconButton type="button" aria-label="Search"><Glyph d={SEARCH} /></IconButton>
            <IconButton type="button" aria-label="Menu"><Glyph d={MENU} /></IconButton>
          </HeaderActions>
        </Header>

        <Chat>
          <WallpaperArt />
          <Messages>
            {ENTRIES.map((entry, i) =>
              entry.kind === "date" ? (
                <DateRow key={i}><DatePill>{entry.label}</DatePill></DateRow>
              ) : (
                <MessageRow key={i} $out={entry.out} $grouped={entry.grouped}>
                  {entry.quote && (
                    <ReactButton type="button" aria-label="React"><ReactionFace /></ReactButton>
                  )}
                  <Bubble $out={entry.out} $tail={!entry.grouped}>
                    {!entry.grouped && <Tail out={entry.out} />}
                    {entry.quote && (
                      <QuoteInset>
                        <Quote>
                          <QuoteAuthor>{entry.quote.author}</QuoteAuthor>
                          <QuoteText dir="rtl">{entry.quote.text}</QuoteText>
                        </Quote>
                      </QuoteInset>
                    )}
                    <Body>
                      <MessageText dir="rtl">{entry.text}</MessageText>
                      <Meta $out={entry.out}>
                        <time>{entry.time}</time>
                        {entry.out && (
                          <Ticks $read={entry.read} width="19" height="19" viewBox="0 1 18 18" aria-hidden="true">
                            <path d={TICKS} fill="currentColor" />
                          </Ticks>
                        )}
                      </Meta>
                    </Body>
                  </Bubble>
                </MessageRow>
              )
            )}
          </Messages>
          <StickyDates>
            <LeavingPill aria-hidden="true" />
            <DatePill>SATURDAY</DatePill>
          </StickyDates>
        </Chat>

        <Composer onSubmit={(e) => e.preventDefault()}>
          <ComposerTools>
            <IconButton type="button" aria-label="Emoji"><Glyph d={SMILEY} size={29} /></IconButton>
            <IconButton type="button" aria-label="Attach"><Glyph d={CLIP} /></IconButton>
          </ComposerTools>
          <Field>
            <Caret />
            <FieldInput type="text" placeholder="Type a message" aria-label="Type a message" />
            <StatusDot />
          </Field>
          <IconButton type="button" aria-label="Record voice message"><Glyph d={MIC} size={26} /></IconButton>
        </Composer>
      </Page>
    </>
  );
}
